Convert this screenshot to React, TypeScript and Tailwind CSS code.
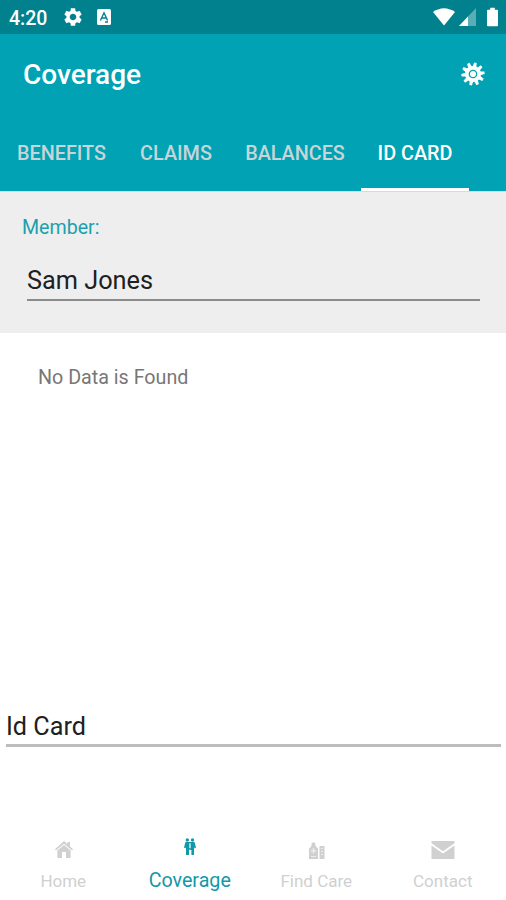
import type { ReactNode } from "react";
import { MdSettings } from "react-icons/md";

interface Tab {
  label: string;
  width: string;
}

interface NavItem {
  label: string;
  icon: ReactNode;
}

const tabs: Tab[] = [
  { label: "BENEFITS", width: "w-[123px]" },
  { label: "CLAIMS", width: "w-[106px]" },
  { label: "BALANCES", width: "w-[132px]" },
  { label: "ID CARD", width: "w-[108px]" },
];

const gearTeeth = [0, 36, 72, 108, 144, 180, 216, 252, 288, 324];

function GearIcon() {
  return (
    <svg className="size-6" viewBox="-12 -12 24 24" fill="#fff">
      {gearTeeth.map((angle) => (
        <path key={angle} d="M-1.9-7L-1.3-11.6H1.3L1.9-7Z" transform={`rotate(${angle + 12})`} />
      ))}
      <circle r="8" />
      <circle r="3.7" fill="none" stroke="#00a2b3" strokeWidth="1.3" />
    </svg>
  );
}

function HomeIcon() {
  return (
    <svg className="ml-px h-[18px] w-[18px]" viewBox="0 0 18 18" fill="currentColor">
      <path d="M9 0L0 8.3l1 1.2L9 2.8l8 6.7 1-1.2-3-2.7V1h-2.5v2.3z" />
      <path d="M2.4 9.5L9 4l6.6 5.5V17H11v-6H7v6H2.4z" />
    </svg>
  );
}

function CoverageIcon() {
  return (
    <svg className="h-[18px] w-[12px]" viewBox="0 0 12 18" fill="currentColor">
      <circle cx="3.3" cy="2" r="1.7" />
      <circle cx="8.5" cy="2" r="1.7" />
      <path d="M1.5 4h9L12 9.5l-1.4 1L10 9v8H7.4v-5H6.6L5 11.5V17H2V9.5l-1 .8L0 9.5z" />
      <path d="M5 5.2h1.9v5H5z" fill="#fff" fillOpacity=".65" />
    </svg>
  );
}

function FindCareIcon() {
  return (
    <svg className="ml-px h-[17px] w-[18px]" viewBox="0 0 18 17" fill="currentColor">
      <path d="M3.5 4V1.5L5.5 0l2 1.5V4L10 6.5V17H1V6.5z" />
      <path d="M11.5 4h5v13h-5z" />
      <path
        d="M4.8 6h1.4v2H8v1.4H6.2v2H4.8v-2H3V8h1.8zM3 14h5v1H3zM13 6h2v1h-2zM13 9h2v1h-2zM13 12h2v1h-2z"
        fill="#fff"
        fillOpacity=".6"
      />
    </svg>
  );
}

function MailIcon() {
  return (
    <svg className="h-[18px] w-6" viewBox="0 0 24 18" fill="currentColor">
      <path d="M.5 0h23v2.2L12 10.2.5 2.2z" />
      <path d="M.5 4.5L12 12.5l11.5-8V18H.5z" />
    </svg>
  );
}

const navItems: NavItem[] = [
  { label: "Home", icon: <HomeIcon /> },
  { label: "Coverage", icon: <CoverageIcon /> },
  { label: "Find Care", icon: <FindCareIcon /> },
  { label: "Contact", icon: <MailIcon /> },
];

function StatusBar() {
  return (
    <div className="flex h-[34px] items-center bg-[#00818d] pl-[9px] text-white">
      <span className="w-[53px] pt-[3px] text-[19.5px] leading-[34px] font-medium">4:20</span>
      <MdSettings className="size-[22px]" />
      <svg className="ml-[13px] h-4 w-[14px]" viewBox="0 0 14 16">
        <rect width="14" height="16" rx="1.5" fill="#fff" />
        <path d="M3.4 11.5L7 3.8l3.6 7.7M4.8 9h4.4M8 13h3" fill="none" stroke="#00818d" strokeWidth="1.4" />
      </svg>
      <svg className="ml-auto h-[18px] w-[22px]" viewBox="0 0 22 18">
        <path d="M0 4Q11-3.5 22 4L11 17.5Z" fill="#fff" />
      </svg>
      <svg className="ml-[4px] h-[18px] w-[17px]" viewBox="0 0 17 18">
        <path d="M17 0v18H0z" fill="#fff" fillOpacity=".35" />
        <path d="M9 8.5V18H0z" fill="#fff" />
      </svg>
      <svg className="mr-2 ml-[11px] h-5 w-[11px]" viewBox="0 0 12 20" fill="#fff">
        <path d="M3.5 0h5v2H11a1 1 0 0 1 1 1v16a1 1 0 0 1-1 1H1a1 1 0 0 1-1-1V3a1 1 0 0 1 1-1h2.5z" />
      </svg>
    </div>
  );
}

export default function App() {
  return (
    <div className="flex h-[900px] w-[506px] flex-col overflow-hidden bg-white font-[Roboto,'Liberation_Sans',sans-serif]">
      <StatusBar />

      <header className="flex h-[157px] flex-col bg-[#00a2b3]">
        <div className="flex h-20 items-center justify-between pr-[21px] pl-[23px]">
          <h1 className="pt-0.5 text-[28px] font-medium text-white">Coverage</h1>
          <GearIcon />
        </div>
        <nav className="flex h-[77px]">
          {tabs.map((tab) => {
            const active = tab.label === "ID CARD";
            return (
              <div
                key={tab.label}
                className={`flex shrink-0 justify-center border-b-3 pt-[28px] text-[19.8px] leading-6 font-medium whitespace-nowrap ${tab.width} ${
                  active ? "border-white text-white" : "border-transparent text-[#c8d5d8]"
                }`}
              >
                {tab.label}
              </div>
            );
          })}
        </nav>
      </header>

      <section className="h-[142px] border-t border-[#d9d9d9] bg-[#eee] pt-6 pr-[26px] pl-[22px]">
        <div className="text-[19.6px] leading-6 text-[#1ca0ae]">Member:</div>
        <div className="ml-[5px] h-[61px] border-b-2 border-[#8b8b8b] pt-[25px] text-[25.3px] leading-8 text-[#202020]">
          Sam Jones
        </div>
      </section>

      <main className="flex flex-1 flex-col">
        <p className="pt-[33px] pl-[38px] text-[19.7px] leading-6 text-[#777]">No Data is Found</p>
        <div className="mt-auto mr-[5px] mb-[77px] ml-[6px] h-[38px] border-b-3 border-[#bdbdbd] pt-0.5 text-[25.2px] leading-8 text-[#202020]">
          Id Card
        </div>
      </main>

      <nav className="grid h-[76px] grid-cols-4">
        {navItems.map((item) => {
          const active = item.label === "Coverage";
          return (
            <div
              key={item.label}
              className={`flex flex-col items-center justify-end ${
                active ? "pb-[7px] text-[19.7px] text-[#1299a8]" : "pb-[7px] text-[17px] text-[#d0d0d0]"
              }`}
            >
              {item.icon}
              <span className={active ? "mt-[13px] leading-6" : "mt-[10px] leading-6"}>{item.label}</span>
            </div>
          );
        })}
      </nav>
    </div>
  );
}
